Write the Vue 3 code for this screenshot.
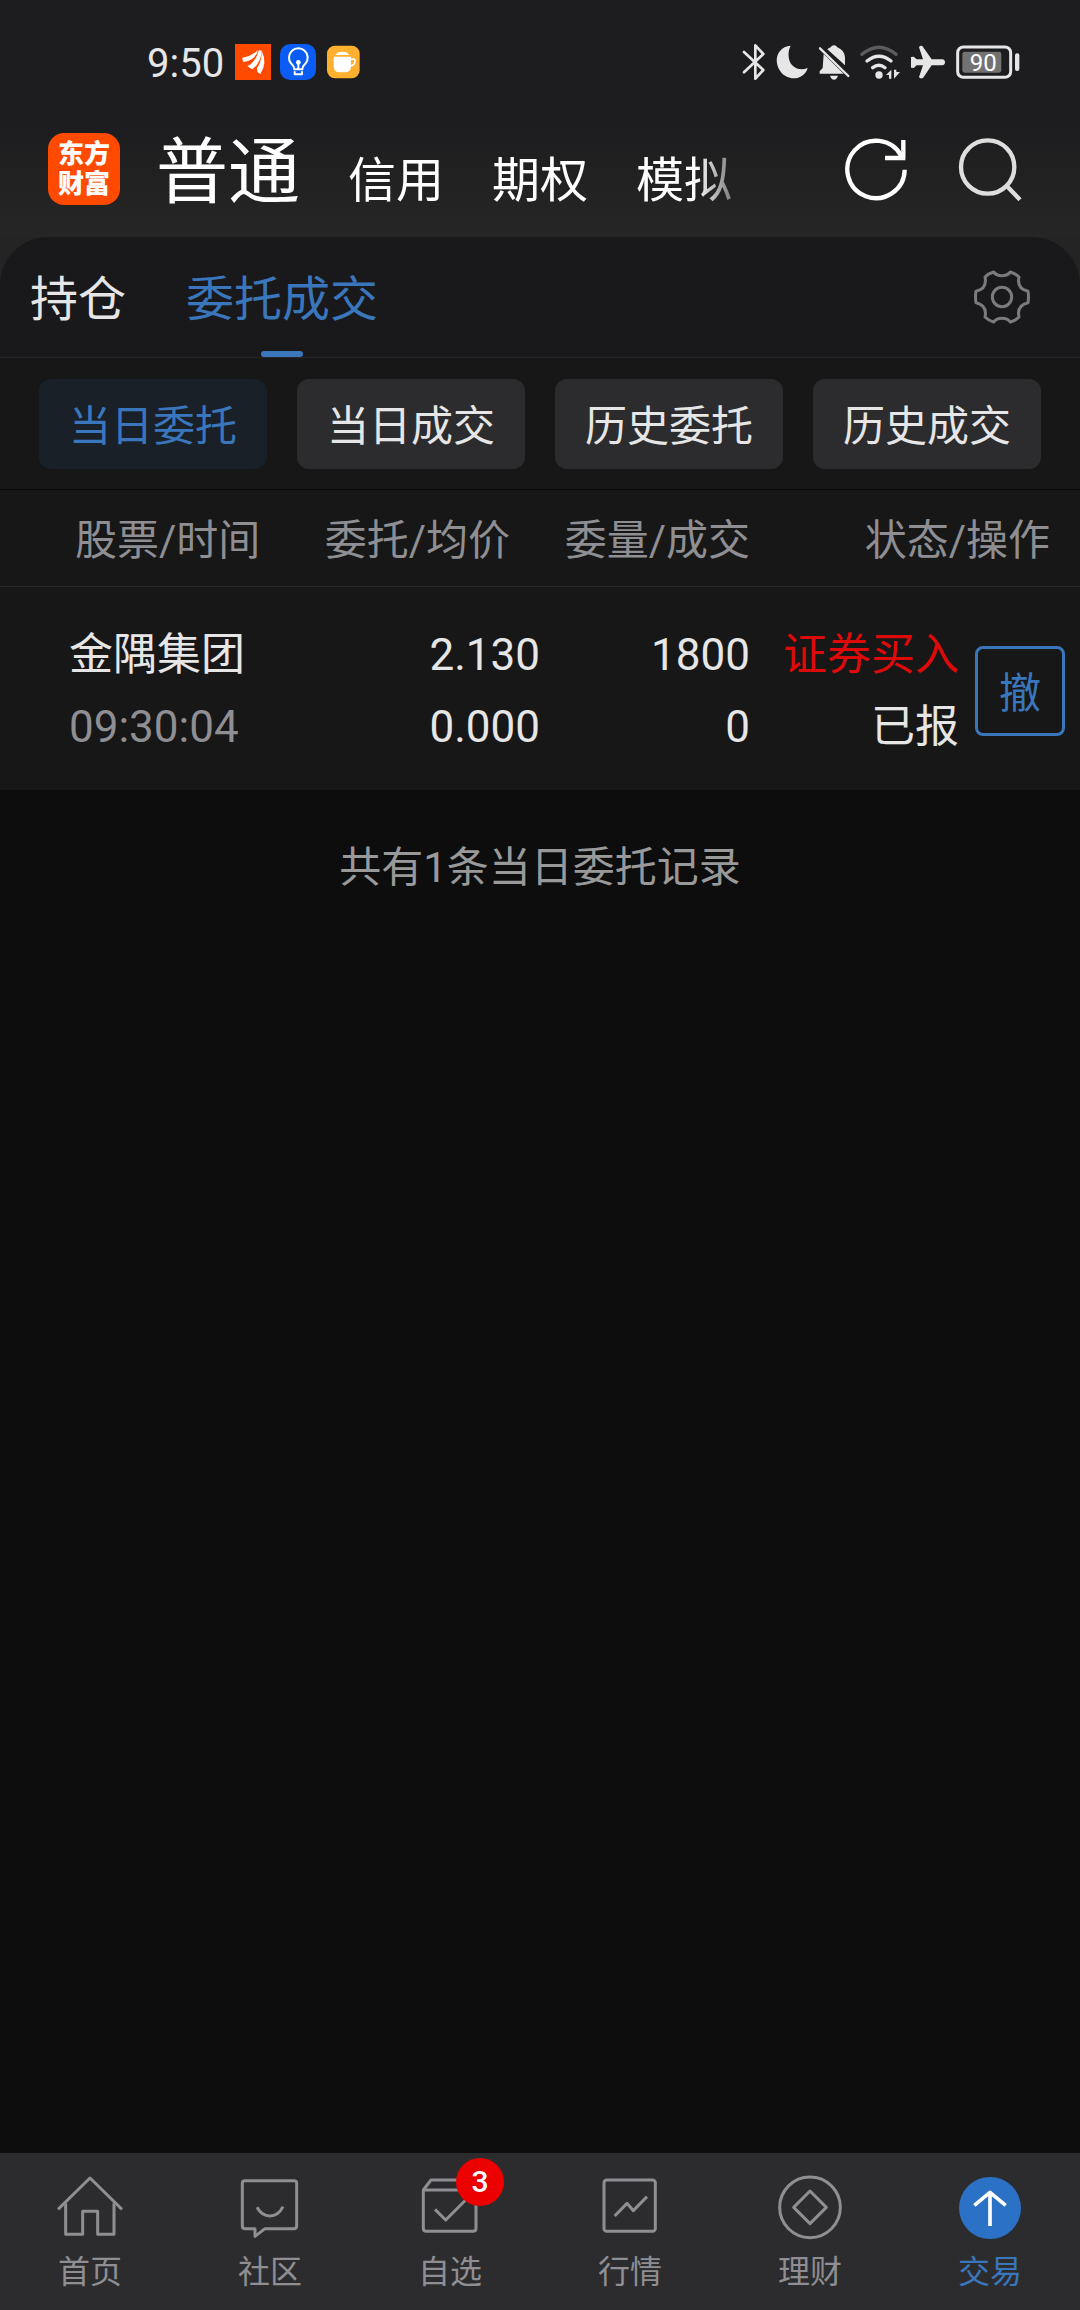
<script setup>
import { ref } from 'vue'

const accounts = ['普通', '信用', '期权', '模拟']
const activeAccount = ref('普通')

const tabs = ['持仓', '委托成交']
const activeTab = ref('委托成交')

const filters = ['当日委托', '当日成交', '历史委托', '历史成交']
const activeFilter = ref('当日委托')

const orders = [
  {
    name: '金隅集团',
    time: '09:30:04',
    price: '2.130',
    avgPrice: '0.000',
    amount: 1800,
    filled: 0,
    side: '证券买入',
    status: '已报',
  },
]

const navItems = [
  { key: 'home', label: '首页' },
  { key: 'community', label: '社区' },
  { key: 'watchlist', label: '自选', badge: 3 },
  { key: 'market', label: '行情' },
  { key: 'wealth', label: '理财' },
  { key: 'trade', label: '交易' },
]
const activeNav = ref('trade')
</script>

<template>
  <div class="app">
    <div class="status-bar">
      <div class="status-left">
        <span class="clock">9:50</span>
        <svg class="app-icon" viewBox="0 0 108 108">
          <rect width="108" height="108" fill="#ff4a00" />
          <g fill="#fff">
            <path d="M22 41 Q44 40 70 18 Q60 50 24 54 Z" />
            <path d="M37 67 Q62 54 72 18 L80 20 Q78 56 52 76 Z" />
            <path d="M66 72 Q80 54 80 20 Q98 56 76 90 L67 84 Z" />
          </g>
        </svg>
        <svg class="app-icon" viewBox="0 0 108 108">
          <rect width="108" height="108" rx="30" fill="#0a5cf5" />
          <g fill="none" stroke="#fff" stroke-width="6" stroke-linecap="round" stroke-linejoin="round">
            <path d="M43 76 Q42 66 33 58 A28 28 0 1 1 77 58 Q68 66 67 76 Z" />
            <path d="M44 84 V91 H66 V84 M55 56 V75" />
          </g>
          <circle cx="55" cy="55" r="7" fill="#fff" />
        </svg>
        <svg class="app-icon" viewBox="0 0 108 108">
          <rect x="6" y="5" width="98" height="98" rx="24" fill="#ffb02e" />
          <path d="M26 38 H78 V66 Q78 85 60 85 H45 Q26 85 26 66 Z" fill="#fff" />
          <path d="M31 33 Q38 22 52 23 Q68 23 73 33 Z" fill="#fff" />
          <path d="M78 46 Q93 43 90 53 Q88 64 76 66" fill="none" stroke="#fff" stroke-width="5" />
        </svg>
      </div>
      <div class="status-right">
        <svg width="24" height="36" viewBox="64 40 72 108">
          <path
            d="M70 64 L128 118 L104 144 V44 L128 70 L70 125"
            fill="none"
            stroke="#e6e6e6"
            stroke-width="8"
            stroke-linecap="round"
            stroke-linejoin="round"
          />
        </svg>
        <svg width="32" height="36" viewBox="169 40 96 108">
          <path
            d="M213 45 C172 48 160 92 182 122 C206 156 256 146 264 112 C240 122 218 110 211 94 C204 76 206 58 213 45 Z"
            fill="#e6e6e6"
          />
        </svg>
        <svg width="32" height="36" viewBox="299 40 96 108">
          <g fill="#e6e6e6">
            <path d="M316 70 L376 129 H304 V122 L313 112 Z" />
            <path d="M327 56 Q332 51 337 50 Q340 44 347 44 Q354 44 357 50 Q378 58 380 80 V104 Z" />
            <path d="M335 135 H359 Q355 147 347 147 Q339 147 335 135 Z" />
          </g>
          <path d="M305 53 L390 136" stroke="#e6e6e6" stroke-width="7" stroke-linecap="round" />
        </svg>
        <svg width="40" height="36" viewBox="425 40 120 108">
          <g fill="none" stroke-width="10" stroke-linecap="round">
            <path d="M431 71 Q482 28 533 71" stroke="#5c5c5d" />
            <path d="M446 91 Q482 62 518 91" stroke="#e6e6e6" />
            <path d="M463 111 Q482 96 500 111" stroke="#e6e6e6" />
          </g>
          <circle cx="482" cy="133" r="11" fill="#e6e6e6" />
          <path d="M519 117 V144 H512 V133 H503 Z M527 144 V117 H534 V124 H545 Z" fill="#e6e6e6" />
        </svg>
        <svg width="36" height="36" viewBox="567 40 108 108">
          <path
            d="M570 79 L578 78 L587 86 H606 L594 50 Q596 43 604 46 L632 86 H664 Q672 87 672 95 Q672 103 664 104 H632 L606 142 Q597 146 594 139 L606 104 H587 L578 112 L570 111 Z"
            fill="#e6e6e6"
          />
        </svg>
        <svg width="64" height="36" viewBox="707 40 192 108">
          <rect x="712" y="49" width="159" height="91" rx="17" fill="none" stroke="#e6e6e6" stroke-width="9" />
          <rect x="726" y="63" width="117" height="63" rx="7" fill="#727272" />
          <rect x="884" y="68" width="13" height="53" rx="6" fill="#e6e6e6" />
          <text x="789" y="121" class="battery-text" text-anchor="middle">90</text>
        </svg>
      </div>
    </div>

    <header class="header">
      <div class="logo">
        <span>东方</span>
        <span>财富</span>
      </div>
      <div class="accounts">
        <button
          v-for="account in accounts"
          :key="account"
          type="button"
          class="account"
          :class="{ active: account === activeAccount }"
          @click="activeAccount = account"
        >
          {{ account }}
        </button>
      </div>
      <div class="header-actions">
        <button type="button" class="icon-button" aria-label="刷新">
          <svg width="64" height="64" viewBox="282 84 192 192" fill="none" stroke="#fff" stroke-width="13">
            <path d="M464 182 A86 86 0 1 1 454 141" />
            <path d="M460 93 V147 M405 147 H466" />
          </svg>
        </button>
        <button type="button" class="icon-button" aria-label="搜索">
          <svg width="64" height="64" viewBox="622 78 192 192" fill="none" stroke="#dedede" stroke-width="13">
            <circle cx="711" cy="168" r="80" />
            <path d="M769 226 L808 266" />
          </svg>
        </button>
      </div>
    </header>

    <div class="tabs-wrap">
      <div class="tabs">
        <button
          v-for="tab in tabs"
          :key="tab"
          type="button"
          class="tab"
          :class="{ active: tab === activeTab }"
          @click="activeTab = tab"
        >
          {{ tab }}
        </button>
        <button type="button" class="icon-button settings" aria-label="设置">
          <svg width="56" height="56" viewBox="672 478 168 168" fill="none" stroke="#7b7b7d" stroke-width="9" stroke-linejoin="round">
            <path
              d="M731 487 C742 502 770 502 781 487 Q796 491 807 502 C802 525 812 540 834 545 Q837 562 834 579 C812 584 802 599 807 622 Q796 633 781 637 C770 622 742 622 731 637 Q716 633 705 622 C710 599 700 584 678 579 Q675 562 678 545 C700 540 710 525 705 502 Q716 491 731 487 Z"
            />
            <circle cx="756" cy="562" r="29" />
          </svg>
        </button>
      </div>
    </div>

    <div class="filters">
      <button
        v-for="filter in filters"
        :key="filter"
        type="button"
        class="filter"
        :class="{ active: filter === activeFilter }"
        @click="activeFilter = filter"
      >
        {{ filter }}
      </button>
    </div>

    <table class="orders">
      <thead>
        <tr>
          <th class="col-stock">股票/时间</th>
          <th class="col-price">委托/均价</th>
          <th class="col-amount">委量/成交</th>
          <th class="col-status">状态/操作</th>
        </tr>
      </thead>
      <tbody>
        <tr v-for="order in orders" :key="order.time">
          <td class="col-stock">
            <div>{{ order.name }}</div>
            <div class="time">{{ order.time }}</div>
          </td>
          <td>
            <div>{{ order.price }}</div>
            <div>{{ order.avgPrice }}</div>
          </td>
          <td>
            <div>{{ order.amount }}</div>
            <div>{{ order.filled }}</div>
          </td>
          <td>
            <div class="status-cell">
              <div>
                <div class="buy">{{ order.side }}</div>
                <div>{{ order.status }}</div>
              </div>
              <button type="button" class="cancel">撤</button>
            </div>
          </td>
        </tr>
      </tbody>
    </table>

    <p class="summary">共有{{ orders.length }}条当日委托记录</p>

    <nav class="bottom-nav">
      <a
        v-for="item in navItems"
        :key="item.key"
        href="#"
        class="nav-item"
        :class="{ active: item.key === activeNav }"
        @click.prevent="activeNav = item.key"
      >
        <span class="nav-icon">
          <svg width="66" height="66" viewBox="0 0 198 198" fill="none" stroke="currentColor" stroke-width="9" stroke-linejoin="round">
            <template v-if="item.key === 'home'">
              <path d="M3 106 L99 12 L195 106" />
              <path d="M26 88 V181 H77 V112 H122 V181 H171 V88" />
            </template>
            <template v-else-if="item.key === 'community'">
              <path d="M24 20 H171 Q179 20 179 28 V156 Q179 164 171 164 H84 L54 187 V164 H24 Q16 164 16 156 V28 Q16 20 24 20 Z" />
              <path d="M60 100 Q74 126 99 126 Q124 126 138 98" />
            </template>
            <template v-else-if="item.key === 'watchlist'">
              <path d="M19 48 L42 18 H156 L177 48 M19 48 H177 V163 Q177 172 168 172 H28 Q19 172 19 163 Z" />
              <path d="M54 106 L86 138 L146 78" />
            </template>
            <template v-else-if="item.key === 'market'">
              <rect x="21" y="18" width="154" height="154" rx="8" />
              <path d="M53 126 L90 88 L109 110 L150 68" />
            </template>
            <template v-else-if="item.key === 'wealth'">
              <circle cx="99" cy="100" r="91" />
              <path d="M99 51 L148 100 L99 149 L50 100 Z" />
            </template>
            <template v-else>
              <circle cx="99" cy="102" r="93" fill="#2b72c6" stroke="none" />
              <path d="M99 156 V55 M52 94 L99 55 L146 94" stroke="#fff" stroke-width="11" />
            </template>
          </svg>
          <span v-if="item.badge" class="badge">{{ item.badge }}</span>
        </span>
        <span class="nav-label">{{ item.label }}</span>
      </a>
    </nav>
  </div>
</template>

<style>
body {
  margin: 0;
  background: #0d0d0d;
}
</style>

<style scoped>
.app {
  display: flex;
  flex-direction: column;
  min-height: 100vh;
  background: #0d0d0d;
  color: #e6e6e6;
  font-family: Roboto, 'Noto Sans CJK SC', sans-serif;
}

button {
  margin: 0;
  padding: 0;
  border: none;
  background: none;
  color: inherit;
  font-family: inherit;
  white-space: nowrap;
  cursor: pointer;
}

svg {
  display: block;
}

.status-bar {
  display: flex;
  align-items: center;
  justify-content: space-between;
  height: 124px;
  padding: 0 60px 0 147px;
  background: #1d1d1f;
}

.status-left {
  display: flex;
  align-items: center;
  gap: 9px;
}

.clock {
  margin-right: 2px;
  padding-top: 2px;
  font-size: 40px;
}

.app-icon {
  width: 36px;
  height: 36px;
}

.status-right {
  display: flex;
  align-items: center;
  gap: 10px;
}

.battery-text {
  fill: #fff;
  font-size: 72px;
}

.header {
  display: flex;
  align-items: center;
  height: 90px;
  padding: 0 58px 23px 48px;
  background: linear-gradient(#1d1d1f, #262626);
}

.logo {
  display: flex;
  flex-direction: column;
  align-items: center;
  justify-content: center;
  width: 72px;
  height: 72px;
  border-radius: 16px;
  background: #ff4a00;
  color: #fff;
  font-size: 26px;
  font-weight: 900;
  line-height: 30px;
}

.accounts {
  display: flex;
  flex: 1;
  align-items: baseline;
  gap: 48px;
  margin-left: 36px;
  padding-top: 16px;
  overflow: hidden;
  mask-image: linear-gradient(to right, #000 540px, transparent 600px);
}

.account {
  color: #fff;
  font-size: 48px;
  line-height: 90px;
}

.account.active {
  font-size: 72px;
}

.header-actions {
  display: flex;
  gap: 50px;
}

.tabs-wrap {
  background: #242424;
}

.tabs {
  display: flex;
  align-items: stretch;
  gap: 60px;
  height: 120px;
  padding: 0 50px 0 30px;
  border-bottom: 1px solid #262628;
  border-radius: 48px 48px 0 0;
  background: #19191b;
}

.tab {
  display: flex;
  flex-direction: column;
  align-items: center;
  padding-top: 12px;
  font-size: 48px;
  line-height: 102px;
}

.tab.active {
  color: #3a76bb;
}

.tab.active::after {
  width: 42px;
  height: 6px;
  border-radius: 3px;
  background: #3a76bb;
  content: '';
}

.settings {
  display: flex;
  align-items: center;
  margin-left: auto;
}

.filters {
  display: grid;
  grid-template-columns: repeat(4, 1fr);
  gap: 30px;
  padding: 21px 39px 20px;
  border-bottom: 1px solid #0a0a0a;
  background: #171717;
}

.filter {
  height: 90px;
  padding-bottom: 3px;
  border-radius: 12px;
  background: #2c2c2e;
  font-size: 42px;
}

.filter.active {
  background: #1a2028;
  color: #3a76bb;
}

.orders {
  width: 100%;
  border-collapse: collapse;
  table-layout: fixed;
  background: #171717;
}

.orders th,
.orders td {
  box-sizing: border-box;
  text-align: right;
  white-space: nowrap;
}

.orders th {
  height: 96px;
  padding: 0 0 3px;
  border-bottom: 1px solid #262626;
  color: #8e8e93;
  font-size: 42px;
  font-weight: 400;
}

.orders td {
  padding: 32px 0 27px;
  font-size: 44px;
  line-height: 72px;
}

.orders th.col-stock {
  width: 28%;
  padding-left: 75px;
  text-align: left;
}

.orders td.col-stock {
  padding-left: 69px;
  text-align: left;
}

.orders th.col-price {
  width: 22%;
  padding-right: 30px;
}

.orders th.col-amount {
  width: 210px;
}

.orders th.col-status {
  padding-right: 30px;
}

.time {
  color: #8e8e93;
}

.buy {
  color: #dd0a0a;
}

.status-cell {
  display: flex;
  align-items: center;
  justify-content: flex-end;
  gap: 16px;
  padding-right: 15px;
}

.cancel {
  width: 90px;
  height: 90px;
  padding-bottom: 3px;
  border: 3px solid #3a76bb;
  border-radius: 8px;
  color: #3a76bb;
  font-size: 42px;
}

.summary {
  flex: 1;
  margin: 0;
  padding-top: 48px;
  color: #999;
  font-size: 42px;
  line-height: 60px;
  text-align: center;
}

.bottom-nav {
  display: grid;
  grid-template-columns: repeat(6, 1fr);
  padding: 21px 0 16px;
  background: #2c2c2e;
}

.nav-item {
  display: flex;
  flex-direction: column;
  align-items: center;
  gap: 10px;
  color: #8e8e93;
  text-decoration: none;
}

.nav-item.active {
  color: #3a76bb;
}

.nav-icon {
  position: relative;
}

.badge {
  position: absolute;
  top: -16px;
  right: -21px;
  width: 48px;
  height: 48px;
  border-radius: 50%;
  background: #ec0000;
  color: #fff;
  font-size: 30px;
  font-weight: 500;
  line-height: 48px;
  text-align: center;
}

.nav-label {
  font-size: 32px;
  line-height: 44px;
}
</style>
